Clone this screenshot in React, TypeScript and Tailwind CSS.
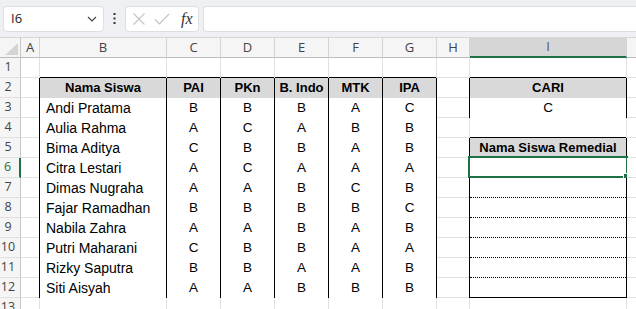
import React from "react";

const W = [21, 19, 127, 54, 54, 54, 54, 54, 33, 157, 40];
const LETTERS = ["", "A", "B", "C", "D", "E", "F", "G", "H", "I", ""];

const DATA: [string, string, string, string, string, string][] = [
  ["Andi Pratama", "B", "B", "B", "A", "C"],
  ["Aulia Rahma", "A", "C", "A", "B", "B"],
  ["Bima Aditya", "C", "B", "B", "A", "B"],
  ["Citra Lestari", "A", "C", "A", "A", "A"],
  ["Dimas Nugraha", "A", "A", "B", "C", "B"],
  ["Fajar Ramadhan", "B", "B", "B", "B", "C"],
  ["Nabila Zahra", "A", "A", "B", "A", "B"],
  ["Putri Maharani", "C", "B", "B", "A", "A"],
  ["Rizky Saputra", "B", "B", "A", "A", "B"],
  ["Siti Aisyah", "A", "A", "B", "B", "B"],
];

type Bottom = "grid" | "solid" | "dotted";

function rightBlack(r: number, c: number) {
  if (r >= 2 && r <= 12 && c >= 1 && c <= 7) return true;
  const iRows = r === 2 || r === 3 || (r >= 5 && r <= 12);
  if (iRows && (c === 8 || c === 9)) return true;
  return false;
}

function bottomKind(r: number, c: number): Bottom {
  if (c >= 2 && c <= 7) {
    if (r === 1 || r === 2 || r === 12) return "solid";
    if (r >= 3 && r <= 11) return "dotted";
  }
  if (c === 9) {
    if (r >= 1 && r <= 5) return "solid";
    if (r >= 6 && r <= 11) return "dotted";
    if (r === 12) return "solid";
  }
  return "grid";
}

function cellContent(r: number, c: number): { text: string; bold?: boolean; gray?: boolean; left?: boolean } {
  if (r === 2 && c >= 2 && c <= 7) {
    const h = ["Nama Siswa", "PAI", "PKn", "B. Indo", "MTK", "IPA"][c - 2];
    return { text: h, bold: true, gray: true };
  }
  if (r >= 3 && r <= 12 && c >= 2 && c <= 7) {
    const row = DATA[r - 3];
    return { text: row[c - 2], left: c === 2 };
  }
  if (c === 9) {
    if (r === 2) return { text: "CARI", bold: true, gray: true };
    if (r === 3) return { text: "C" };
    if (r === 5) return { text: "Nama Siswa Remedial", bold: true, gray: true };
  }
  return { text: "" };
}

function Cell({ r, c }: { r: number; c: number }) {
  const w = W[c];
  const rb = rightBlack(r, c);
  const bk = bottomKind(r, c);
  const content = cellContent(r, c);
  return (
    <div
      className={
        "relative flex flex-col shrink-0 h-full border-r " +
        (rb ? "border-r-black " : "border-r-[#e1e1e1] ") +
        (content.gray ? "bg-[#d9d9d9]" : "bg-white")
      }
      style={{ width: w }}
    >
      <div
        className={
          "flex-1 flex items-center overflow-visible whitespace-nowrap text-[#000] " +
          (content.left ? "justify-start pl-[6px] text-[14px] " : "justify-center text-[13.5px] ") +
          (content.bold ? "font-bold text-[13px]" : "")
        }
      >
        {content.text}
      </div>
      {bk === "grid" && <div className="h-px shrink-0 bg-[#e1e1e1]" />}
      {bk === "solid" && <div className="h-px shrink-0 bg-black" />}
      {bk === "dotted" && <div className="h-0 shrink-0 border-t border-dotted border-black" />}
      {r === 6 && c === 9 && (
        <div className="absolute left-[-2px] top-[-2px] w-[160px] h-[22px] border-2 border-[#1e7145] pointer-events-none">
          <div className="absolute right-[-4px] bottom-[-4px] w-[6px] h-[6px] bg-[#1e7145] outline outline-1 outline-white" />
        </div>
      )}
    </div>
  );
}

function RowHeader({ r }: { r: number }) {
  const sel = r === 6;
  return (
    <div
      className={
        "shrink-0 h-full flex items-center justify-center pr-[4px] bg-[#f5f5f5] border-b border-b-[#e1e1e1] text-[12.5px] " +
        (sel ? "border-r-2 border-r-[#1e7145] text-[#1e7145]" : "border-r border-r-[#c6c6c6] text-[#444]")
      }
      style={{ width: W[0], fontFamily: '"Open Sans", "Noto Sans", sans-serif' }}
    >
      {r}
    </div>
  );
}

function ColumnHeaders() {
  return (
    <div
      className="flex h-[21px] border-t border-t-[#d6d6d6] bg-[#f5f5f5]"
      style={{ fontFamily: '"Open Sans", "Noto Sans", sans-serif' }}
    >
      <div
        className="relative shrink-0 h-full border-r border-r-[#c6c6c6] border-b border-b-[#bdbdbd]"
        style={{ width: W[0] }}
      >
        <svg className="absolute right-[2px] bottom-[2px]" width="13" height="12" viewBox="0 0 13 12">
          <polygon points="13,0 13,12 0,12" fill="#d4d4d4" />
        </svg>
      </div>
      {LETTERS.slice(1).map((l, i) => {
        const c = i + 1;
        const sel = c === 9;
        return (
          <div
            key={c}
            className={
              "shrink-0 h-full flex items-center justify-center text-[13px] border-r border-r-[#d4d4d4] " +
              (sel ? "bg-[#d6d6d6] border-b-2 border-b-[#1e7145] text-[#555]" : "border-b border-b-[#bdbdbd] text-[#444]")
            }
            style={{ width: W[c] }}
          >
            {l}
          </div>
        );
      })}
    </div>
  );
}

function Toolbar() {
  return (
    <div
      className="flex items-center h-[37px] bg-[#eef0f3] pl-[3px] pr-0"
      style={{ fontFamily: '"Open Sans", "Noto Sans", sans-serif' }}
    >
      <div className="shrink-0 w-[101px] h-[26px] bg-white rounded-[4px] border border-[#dcdfe3] flex items-center justify-between pl-[7px] pr-[6px]">
        <span className="text-[13px] text-[#222]">I6</span>
        <svg width="10" height="6" viewBox="0 0 10 6">
          <polyline points="1,1 5,5 9,1" fill="none" stroke="#444" strokeWidth="1.2" />
        </svg>
      </div>
      <div className="shrink-0 w-[21px] flex justify-center">
        <svg width="3" height="11" viewBox="0 0 3 11">
          <rect x="0.5" y="0" width="2" height="2" fill="#333" />
          <rect x="0.5" y="4.5" width="2" height="2" fill="#333" />
          <rect x="0.5" y="9" width="2" height="2" fill="#333" />
        </svg>
      </div>
      <div className="shrink-0 w-[74px] h-[26px] bg-white rounded-[4px] border border-[#dcdfe3] flex items-center pl-[6px] gap-[8px]">
        <svg width="14" height="14" viewBox="0 0 14 14">
          <path d="M1.5 1.5 L12.5 12.5 M12.5 1.5 L1.5 12.5" stroke="#c4c4c4" strokeWidth="1.1" fill="none" />
        </svg>
        <svg width="16" height="14" viewBox="0 0 16 14">
          <polyline points="1,7.5 5.5,12 15,2" stroke="#c4c4c4" strokeWidth="1.1" fill="none" />
        </svg>
        <span
          className="italic text-[16px] text-[#333] leading-none ml-[3px]"
          style={{ fontFamily: '"Liberation Serif", "DejaVu Serif", serif' }}
        >
          fx
        </span>
      </div>
      <div className="ml-[4px] flex-1 h-[26px] bg-white rounded-l-[4px] border border-r-0 border-[#dcdfe3]" />
    </div>
  );
}

export default function App() {
  const rows = Array.from({ length: 13 }, (_, i) => i + 1);
  return (
    <div
      className="w-[636px] h-[309px] overflow-hidden bg-white"
      style={{ fontFamily: '"Liberation Sans", Arial, sans-serif' }}
    >
      <Toolbar />
      <ColumnHeaders />
      {rows.map((r) => (
        <div key={r} className="flex h-[20px]">
          <RowHeader r={r} />
          {W.slice(1).map((_, i) => (
            <Cell key={i} r={r} c={i + 1} />
          ))}
        </div>
      ))}
    </div>
  );
}
